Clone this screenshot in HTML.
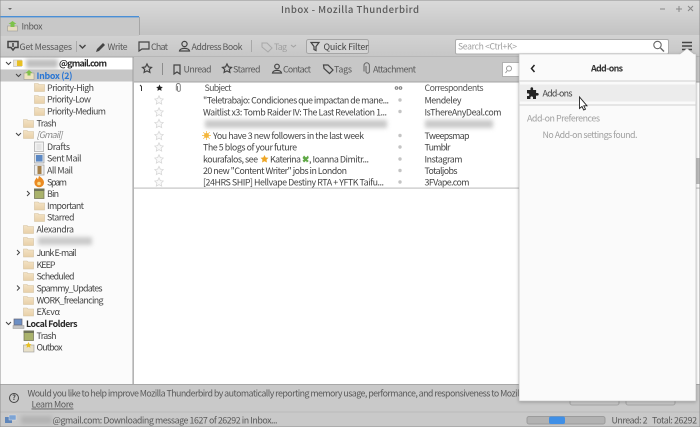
<!DOCTYPE html>
<html><head><meta charset="utf-8"><style>
html,body{margin:0;padding:0;background:#c9c9c9;width:700px;height:427px;overflow:hidden}
svg{display:block;filter:blur(.3px)}
text{font-family:"Noto Sans CJK JP","DejaVu Sans","Liberation Sans",sans-serif;font-size:8.9px;fill:#444;dominant-baseline:central}
.g{fill:#5a5a5a}.m{fill:#a0a0a0}
.b{font-weight:700;fill:#2a2a2a}
.ic{fill:none;stroke:#444;stroke-width:1.2}
</style></head><body>
<svg width="700" height="427" viewBox="0 0 700 427" xmlns="http://www.w3.org/2000/svg">
<defs>
<linearGradient id="t" x1="0" y1="0" x2="0" y2="1"><stop offset="0" stop-color="#dadada"/><stop offset="1" stop-color="#b4b4b4"/></linearGradient>
<linearGradient id="tb" x1="0" y1="0" x2="0" y2="1"><stop offset="0" stop-color="#d2d2d2"/><stop offset="1" stop-color="#c6c6c6"/></linearGradient>
<linearGradient id="fl" x1="0" y1="0" x2="0" y2="1"><stop offset="0" stop-color="#f3e3c6"/><stop offset="1" stop-color="#e8d0a8"/></linearGradient>
<symbol id="f" viewBox="0 0 11 10" overflow="visible"><path d="M.5 1.500h3.500l1 1h5.500v7h-10z" fill="url(#fl)" stroke="#d4c1a0" stroke-width=".6"/></symbol>
<symbol id="s" viewBox="0 0 10 10"><path d="M5 .8l1.300 2.800 3 .4-2.200 2.100.6 3L5 7.600 2.300 9.100l.6-3L.7 4l3-.4z" fill="#fafafa" stroke="#d8d8d8" stroke-width=".8"/></symbol>
<filter id="bl" x="-20%" y="-100%" width="140%" height="300%"><feGaussianBlur stdDeviation="2"/></filter>
<filter id="sh" x="-10%" y="-10%" width="120%" height="120%"><feDropShadow dx="0" dy="1" stdDeviation="1.500" flood-color="#000" flood-opacity=".25"/></filter>
</defs>

<rect width="700" height="427" fill="#c9c9c9"/>
<rect width="700" height="57" fill="url(#t)"/>
<rect y="35" width="700" height="22" fill="url(#tb)"/>
<path d="M8 8h4l-2 2z" fill="#666"/>
<text x="350" y="9" text-anchor="middle" textLength="138" class="g" style="font-size:9.600px;font-weight:500">Inbox - Mozilla Thunderbird</text>
<path d="M660 9h5" stroke="#888" stroke-width="1"/><path d="M676 9h6M679 6v6" stroke="#888" stroke-width="1"/><path d="M688 6l5 5M693 6l-5 5" stroke="#888" stroke-width="1"/>

<!-- tab -->
<rect x="0" y="16" width="139" height="20" fill="#c8c8c8"/>
<rect x="0" y="16" width="139" height="1.400" fill="#4a8fd6"/>
<path d="M139.500 17v18" stroke="#a6a6a6"/>
<rect x="7.500" y="26" width="10" height="5" fill="#e6dcc0" stroke="#999" stroke-width=".6"/><path d="M12.500 21l4 3h-2v3h-4v-3h-2z" fill="#7ec24a"/>
<text x="21.500" y="26" class="g" textLength="21">Inbox</text>

<!-- toolbar -->
<path d="M8 41.500h10v6h-3l-2 2.500-2-2.500H8z" class="ic" style="stroke-width:1.500"/>
<path d="M13 43v4" stroke="#444" stroke-width="1.500"/>
<text x="19.500" y="46.500" class="g" textLength="52.500">Get Messages</text>
<path d="M76.500 41v11" stroke="#aaa"/>
<path d="M79.500 45l3 3 3-3" class="ic" style="stroke-width:1.400"/>
<path d="M96 52l1-3 6-6 2 2-6 6z" fill="#444"/>
<text x="107.500" y="46.500" class="g" textLength="20">Write</text>
<path d="M139 42h10v7h-7l-3 2z" class="ic"/>
<text x="151" y="46.500" class="g" textLength="17">Chat</text>
<circle cx="184.500" cy="44" r="2.600" class="ic"/><path d="M179.500 51c.5-3.500 9.500-3.500 10 0z" class="ic"/>
<text x="191.500" y="46.500" class="g" textLength="51">Address Book</text>
<path d="M251.500 40v12" stroke="#a8a8a8"/>
<path d="M262 43h5l5 5-4 4-6-5z" fill="none" stroke="#a8a8a8" stroke-width="1"/>
<text x="274" y="46.500" class="m" textLength="13">Tag</text>
<path d="M291 45l2.500 2 2.500-2" fill="none" stroke="#a0a0a0"/>
<rect x="306.500" y="39.500" width="62" height="14" rx="2" fill="#d4d4d4" stroke="#a5a5a5"/>
<path d="M311 42.500h8l-3 4v4l-2-1v-3z" class="ic"/>
<text x="323.500" y="46.500" textLength="45">Quick Filter</text>
<rect x="455.500" y="39.500" width="213" height="14.500" rx="1.500" fill="#fff" stroke="#adadad"/>
<text x="458" y="46.500" class="m" textLength="59" style="font-size:8.600px">Search &lt;Ctrl+K&gt;</text>
<circle cx="657.500" cy="45" r="3.700" fill="none" stroke="#666" stroke-width="1.100"/><path d="M660.500 48l3.500 3.500" stroke="#666" stroke-width="1.400"/>
<path d="M682 42.500h10M682 46h10M682 49.500h10" stroke="#444" stroke-width="1.500"/>

<!-- sidebar -->
<rect y="57" width="133" height="327" fill="#fbfbfb"/>
<rect y="57" width="133" height="12" fill="#fff"/>
<rect y="69.500" width="133" height="12" fill="#c6c6c6"/>
<path d="M133 57v327" stroke="#9f9f9f"/>
<rect y="56.500" width="700" height="1" fill="#a5a5a5"/>

<path d="M6 62l2.500 2.500L11 62" class="ic" style="stroke-width:1"/>
<rect x="13.500" y="60" width="8" height="6.500" fill="#ece6d4" stroke="#bbb" stroke-width=".6"/><rect x="17" y="60.500" width="5.500" height="5.500" fill="#e8c023"/>
<rect x="26" y="59" width="32" height="9" fill="#a3a3a3" filter="url(#bl)" opacity=".7"/>
<text x="59" y="63" class="b" textLength="48">@gmail.com</text>

<path d="M16 74l2.500 2.500L21 74" class="ic" style="stroke-width:1"/>
<rect x="24" y="73" width="10" height="6.500" fill="#eee4bf" stroke="#999" stroke-width=".6"/><path d="M29 70l3.500 3h-2v2.500h-3V73h-2z" fill="#80c048"/>
<text x="36.500" y="75.500" class="b" textLength="36" style="fill:#2a76d4">Inbox (2)</text>

<use href="#f" x="34" y="82" width="11" height="10"/><text x="47" y="87.500" textLength="47">Priority-High</text>
<use href="#f" x="34" y="94" width="11" height="10"/><text x="47" y="99" textLength="44">Priority-Low</text>
<use href="#f" x="34" y="106" width="11" height="10"/><text x="47" y="111" textLength="59">Priority-Medium</text>
<use href="#f" x="23" y="118" width="11" height="10"/><text x="36.500" y="123" textLength="20">Trash</text>

<path d="M16 133l2.500 2.500L21 133" class="ic" style="stroke-width:1"/>
<use href="#f" x="23" y="129" width="11" height="10"/><text x="36.500" y="134.500" textLength="26" style="font-style:italic;fill:#8a8a8a">[Gmail]</text>

<rect x="34.500" y="142" width="9" height="9.500" fill="#f2f2f2" stroke="#a5a5a5" stroke-width=".7"/><path d="M36.500 145h5M36.500 147h5M36.500 149h5" stroke="#bbb" stroke-width=".6"/>
<text x="47" y="146.500" textLength="23">Drafts</text>
<rect x="34.500" y="153.500" width="9.500" height="9.500" fill="#dfe3e8" stroke="#999" stroke-width=".7"/><rect x="36" y="155" width="6.500" height="6.500" fill="#5b88c4"/>
<text x="47" y="158" textLength="34.500">Sent Mail</text>
<rect x="34.500" y="165" width="9.500" height="10" fill="#eee" stroke="#999" stroke-width=".7"/><rect x="37.500" y="166" width="4" height="8" fill="#a5804a"/>
<text x="47" y="170" textLength="26">All Mail</text>
<path d="M39 176c3 2 5 4 5 6.500a4.800 4.800 0 0 1-9.600 0c0-2.500 1.500-3 2-5 .8.800 1.200 1.300 1.600 2z" fill="#ea8a22"/><circle cx="39" cy="183.500" r="1.800" fill="#fbdc8a"/>
<text x="47" y="182" textLength="20">Spam</text>
<path d="M27 191l2.500 2.500L27 196" class="ic" style="stroke-width:1"/>
<rect x="34.500" y="189" width="9.500" height="9.500" fill="#a9b26b" stroke="#6e7050" stroke-width=".7"/><rect x="34" y="188.500" width="10.500" height="2.500" fill="#6f7358"/>
<text x="47" y="193.500" textLength="12">Bin</text>
<use href="#f" x="34" y="200.500" width="11" height="10"/><text x="47" y="205.500" textLength="37">Important</text>
<use href="#f" x="34" y="212" width="11" height="10"/><text x="47" y="217" textLength="27.500">Starred</text>
<use href="#f" x="23" y="224" width="11" height="10"/><text x="36.500" y="229" textLength="37.500">Alexandra</text>
<use href="#f" x="23" y="236" width="11" height="10"/><rect x="38" y="237" width="54" height="8" fill="#b5b5b5" filter="url(#bl)" opacity=".7"/>
<path d="M17 250l2.500 2.500L17 255" class="ic" style="stroke-width:1"/>
<use href="#f" x="23" y="247.500" width="11" height="10"/><text x="36.500" y="252.500" textLength="40">Junk E-mail</text>
<use href="#f" x="23" y="259.500" width="11" height="10"/><text x="36.500" y="264.500" textLength="19">KEEP</text>
<use href="#f" x="23" y="271" width="11" height="10"/><text x="36.500" y="276" textLength="38">Scheduled</text>
<path d="M17 285.500l2.500 2.500-2.500 2.500" class="ic" style="stroke-width:1"/>
<use href="#f" x="23" y="283" width="11" height="10"/><text x="36.500" y="288" textLength="66">Spammy_Updates</text>
<use href="#f" x="23" y="295" width="11" height="10"/><text x="36.500" y="300" textLength="67">WORK_freelancing</text>
<use href="#f" x="23" y="306.500" width="11" height="10"/><text x="36.500" y="311.500" textLength="23.500">Έλενα</text>
<path d="M6 322l2.500 2.500L11 322" class="ic" style="stroke-width:1"/>
<rect x="14" y="319" width="8" height="6" fill="#6c8fc4" stroke="#667" stroke-width=".7"/><rect x="13" y="325.500" width="11" height="3" fill="#c4c4c4" stroke="#999" stroke-width=".5"/>
<text x="26" y="323.500" class="b" textLength="51.500">Local Folders</text>
<rect x="24" y="331" width="9.500" height="9.500" fill="#a9b26b" stroke="#6e7050" stroke-width=".7"/><rect x="23.500" y="330.500" width="10.500" height="2.500" fill="#6f7358"/>
<text x="36.500" y="335.500" textLength="20">Trash</text>
<rect x="23.500" y="345" width="10.500" height="7" fill="#e8e0c8" stroke="#999" stroke-width=".6"/><path d="M28.500 342l1 2 2 .3-1.500 1.500.4 2-1.900-1-1.900 1 .4-2-1.500-1.500 2-.3z" fill="#e8c023"/>
<text x="36.500" y="347" textLength="26">Outbox</text>

<!-- main -->
<rect x="134" y="57" width="566" height="327" fill="#fff"/>
<rect x="134" y="57" width="566" height="25" fill="#c7c7c7"/>
<rect x="134" y="81.500" width="566" height="1" fill="#a6a6a6"/>
<path d="M147 64l1.500 3 3 .4-2.200 2 .6 3-2.900-1.500-2.900 1.500.6-3-2.200-2 3-.4z" class="ic"/>
<path d="M162.500 63v12" stroke="#8c8c8c"/>
<path d="M174 65h6v9l-3-2-3 2z" class="ic"/>
<text x="183.500" y="69" class="g" textLength="28">Unread</text>
<path d="M227 64l1.500 3 3 .4-2.200 2 .6 3-2.900-1.500-2.900 1.500.6-3-2.200-2 3-.4z" class="ic"/>
<text x="233" y="69" class="g" textLength="27.500">Starred</text>
<circle cx="277" cy="66.500" r="2.300" class="ic"/><path d="M272.500 73c.5-3.500 8.500-3.500 9 0z" class="ic"/>
<text x="283" y="69" class="g" textLength="28">Contact</text>
<path d="M323.500 65h4.500l5 5-3.500 3.500-5.500-5z" class="ic"/>
<text x="334" y="69" class="g" textLength="18">Tags</text>
<path d="M366 66v5.500a1.700 1.700 0 0 0 3.400 0V65.500a2.700 2.700 0 0 0-5.400 0v6" fill="none" stroke="#666"/>
<text x="373" y="69" class="g" textLength="43">Attachment</text>
<rect x="502.500" y="62.500" width="20" height="14" fill="#fff" stroke="#b0b0b0"/>
<circle cx="509" cy="68.500" r="2.500" fill="none" stroke="#999"/><path d="M507 71l-1.500 2" stroke="#999"/>

<!-- column header -->
<rect x="134" y="82.500" width="566" height="12" fill="#fff"/>
<path d="M140 85l1.500 1.500V91" fill="none" stroke="#333"/>
<path d="M159.500 84.500l1 2.200 2.300.3-1.700 1.600.5 2.300-2.100-1.200-2.100 1.200.5-2.300-1.700-1.600 2.300-.3z" fill="#222"/>
<path d="M177.500 86v4a1.400 1.400 0 0 0 2.800 0v-4.500a2 2 0 0 0-4 0V90.500" fill="none" stroke="#777" stroke-width=".9"/>
<text x="204.500" y="87.500" class="g" textLength="27">Subject</text>
<circle cx="396.500" cy="88" r="1.300" fill="none" stroke="#777"/><circle cx="400.500" cy="88" r="1.300" fill="none" stroke="#777"/>
<text x="424.500" y="87.500" class="g" textLength="59">Correspondents</text>

<!-- rows -->
<use href="#s" x="154" y="95" width="10" height="10"/>
<use href="#s" x="154" y="107" width="10" height="10"/>
<use href="#s" x="154" y="118.500" width="10" height="10"/>
<use href="#s" x="154" y="130.500" width="10" height="10"/>
<use href="#s" x="154" y="142" width="10" height="10"/>
<use href="#s" x="154" y="154" width="10" height="10"/>
<use href="#s" x="154" y="165.500" width="10" height="10"/>
<use href="#s" x="154" y="177" width="10" height="10"/>

<text x="203" y="100" textLength="186">"Teletrabajo: Condiciones que impactan de mane...</text>
<text x="203" y="112" textLength="184">Waitlist x3: Tomb Raider IV: The Last Revelation 1...</text>
<rect x="205" y="120" width="182" height="8" fill="#bbb" filter="url(#bl)" opacity=".8"/>
<circle cx="206.500" cy="135.500" r="2.500" fill="#f4b63c"/><path d="M206.500 131v9M202 135.500h9M203.300 132.300l6.400 6.400M209.700 132.300l-6.400 6.400" stroke="#f4b63c" stroke-width=".7"/>
<text x="213" y="135.500" textLength="151">You have 3 new followers in the last week</text>
<text x="203" y="147" textLength="94">The 5 blogs of your future</text>
<text x="203" y="159" textLength="55">kourafalos, see</text>
<path d="M264.500 155l1.200 2.500 2.800.3-2 1.900.5 2.800-2.500-1.300-2.500 1.300.5-2.800-2-1.900 2.800-.3z" fill="#eea624"/>
<text x="270" y="159" textLength="31">Katerina</text>
<path d="M304 155.500l2 2 2-2 .8 2.500-1.800 1.500 1.800 1.500-2 1.500-.8-1.800-2 1.800-1.500-2 1.500-1-1.500-1.500z" fill="#5fa845"/>
<text x="309" y="159" textLength="60">, Ioanna Dimitr...</text>
<text x="203" y="170.500" textLength="144">20 new "Content Writer" jobs in London</text>
<text x="203" y="182" textLength="181">[24HRS SHIP] Hellvape Destiny RTA + YFTK Taifu...</text>

<g fill="#c4c4c4"><circle cx="400" cy="100" r="1.700"/><circle cx="400" cy="111.500" r="1.700"/><circle cx="400" cy="135.500" r="1.700"/><circle cx="400" cy="147" r="1.700"/><circle cx="400" cy="159" r="1.700"/><circle cx="400" cy="170.500" r="1.700"/><circle cx="400" cy="182" r="1.700"/></g>
<text x="424.500" y="100" textLength="37">Mendeley</text>
<text x="424.500" y="112" textLength="77">IsThereAnyDeal.com</text>
<rect x="425" y="120" width="68" height="8" fill="#bbb" filter="url(#bl)" opacity=".8"/>
<text x="424.500" y="135.500" textLength="45">Tweepsmap</text>
<text x="424.500" y="147" textLength="26">Tumblr</text>
<text x="424.500" y="159" textLength="38">Instagram</text>
<text x="424.500" y="170.500" textLength="33">Totaljobs</text>
<text x="424.500" y="182" textLength="45">3FVape.com</text>
<rect x="134" y="187.500" width="566" height="1.200" fill="#c4c4c4"/>
<rect x="696" y="158" width="4" height="26" fill="#bdbdbd"/>

<!-- bottom -->
<rect y="384" width="700" height="43" fill="#c9c9c9"/>
<rect y="384" width="700" height="1" fill="#a8a8a8"/>
<circle cx="14" cy="398" r="4.500" fill="none" stroke="#444"/><text x="14" y="398" text-anchor="middle" style="font-size:7px;font-weight:700">?</text>
<text x="27.500" y="393" class="g" textLength="502">Would you like to help improve Mozilla Thunderbird by automatically reporting memory usage, performance, and responsiveness to Mozilla?</text>
<text x="31.500" y="404" class="g" textLength="42" style="text-decoration:underline">Learn More</text>
<rect x="570" y="388" width="49" height="17" rx="2" fill="#cacaca" stroke="#a5a5a5"/>
<rect x="626" y="388" width="49" height="17" rx="2" fill="#cacaca" stroke="#a5a5a5"/>
<rect y="411.500" width="700" height="1" fill="#bbb"/>
<rect x="5" y="417" width="7" height="6" fill="#5f86ba"/><rect x="9" y="415" width="7" height="5" fill="#7da4d4" stroke="#eee" stroke-width=".4"/>
<rect x="21" y="416" width="31" height="8" fill="#a9a9a9" filter="url(#bl)" opacity=".7"/>
<text x="52.500" y="420" class="g" textLength="225">@gmail.com: Downloading message 1627 of 26292 in Inbox...</text>
<rect x="527" y="416.500" width="78" height="7.500" rx="2" fill="#b2b2b2" stroke="#9b9b9b"/>
<rect x="549" y="416.500" width="16" height="7.500" rx="2" fill="#3f8fe6"/>
<text x="611.500" y="420" class="g" textLength="36">Unread: 2</text>
<text x="652" y="420" class="g" textLength="45">Total: 26292</text>

<!-- panel -->
<g filter="url(#sh)">
<path d="M519 54h161l7-5.500 7 5.500h2v347H519z" fill="#fafafa" stroke="#b5b5b5" stroke-width=".6"/>
</g>
<path d="M534.500 65l-3 3.500 3 3.500" fill="none" stroke="#222" stroke-width="1.500"/>
<text x="607" y="68" text-anchor="middle" class="b" textLength="32" style="fill:#333">Add-ons</text>
<rect x="519" y="80.500" width="177" height="1" fill="#d0d0d0"/>
<rect x="520" y="84.500" width="175" height="17" fill="#ececec"/>
<rect x="519" y="104.500" width="177" height="1" fill="#d0d0d0"/>
<path d="M527 90h3.500v-1.500a1.300 1.300 0 0 1 2.600 0V90h3v3h1.300a1.300 1.300 0 0 1 0 2.600H536v3.400h-3v-1.300a1.300 1.300 0 0 0-2.600 0V99H527v-3h1a1.300 1.300 0 0 0 0-2.600h-1z" fill="#222"/>
<text x="542.500" y="93" textLength="30">Add-ons</text>
<text x="527" y="118" class="m" textLength="73">Add-on Preferences</text>
<text x="542.500" y="134.500" class="m" textLength="95">No Add-on settings found.</text>
<path d="M579.500 97v11.500l2.500-2 1.700 3.500 1.800-.8-1.700-3.400h3.200z" fill="#fff" stroke="#222" stroke-width=".9"/>
<rect x="0" y="0" width="700" height="427" fill="none" stroke="#8f8f8f" stroke-width="1"/>
</svg>
</body></html>
